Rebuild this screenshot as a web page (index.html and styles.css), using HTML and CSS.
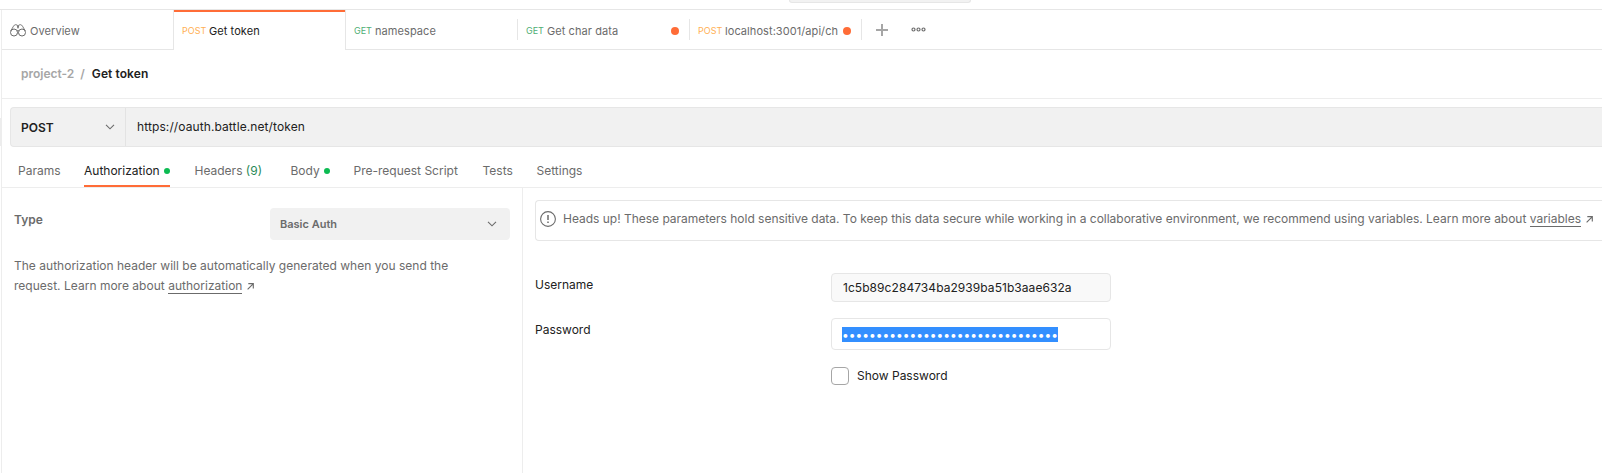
FILE: index.html
```html
<!DOCTYPE html>
<html lang="en">
<head>
<meta charset="utf-8">
<title>Get token</title>
<link rel="stylesheet" href="styles.css">
</head>
<body>
<div class="app">
  <header class="topbar"><div class="search"></div></header>
  <div class="shell">
    <aside class="rail"><div class="rail-item"></div></aside>
    <main class="main">
      <nav class="tabs">
        <div class="tab tab-first">
          <svg class="binoculars" width="16" height="13" viewBox="0 0 16 13" fill="none" stroke="#6b6b6b"><circle cx="4" cy="8.500" r="3.500"/><circle cx="12" cy="8.500" r="3.500"/><path d="M.7 7 3.500 2.200C4.500.3 6.500.3 7.200 1.400h1.600C9.500.3 11.500.3 12.500 2.200L15.300 7M7.200 1.500 8 4.300 8.800 1.500M7.100 6.900Q8 5.900 8.900 6.900M7.500 9h1" stroke-width=".9"/></svg>
          <span class="name">Overview</span>
        </div>
        <div class="tab active"><span class="method post">POST</span><span class="name">Get token</span></div>
        <div class="tab"><span class="method get">GET</span><span class="name">namespace</span></div>
        <div class="tab ruled"><span class="method get">GET</span><span class="name">Get char data</span><i class="unsaved"></i></div>
        <div class="tab ruled"><span class="method post">POST</span><span class="name">localhost:3001/api/ch</span><i class="unsaved"></i></div>
        <div class="tab-actions ruled">
          <svg class="plus" width="12" height="12" viewBox="0 0 12 12" stroke="#a6a6a6" stroke-width="2"><path d="M6 0v12M0 6h12"/></svg>
          <svg class="more" width="15" height="5" viewBox="0 0 15 5" fill="none" stroke="#6b6b6b" stroke-width="1.200"><circle cx="2.500" cy="2.500" r="1.500"/><circle cx="7.500" cy="2.500" r="1.500"/><circle cx="12.500" cy="2.500" r="1.500"/></svg>
        </div>
      </nav>
      <div class="crumbs"><span class="c-project">project-2</span><span class="c-slash">/</span><span class="c-current">Get token</span></div>
      <div class="request">
        <div class="verb"><span class="t-verb">POST</span><svg width="10" height="6" viewBox="0 0 10 6" fill="none" stroke="#6b6b6b" stroke-width="1.100"><path d="m1 .8 4 4 4-4"/></svg></div>
        <div class="url"><span class="t-url">https://oauth.battle.net/token</span></div>
      </div>
      <nav class="sections">
        <span class="section s-params"><span>Params</span></span>
        <span class="section s-auth current"><span>Authorization</span><i class="on"></i></span>
        <span class="section s-headers"><span>Headers <b>(9)</b></span></span>
        <span class="section s-body"><span>Body</span><i class="on"></i></span>
        <span class="section s-pre"><span>Pre-request Script</span></span>
        <span class="section s-tests"><span>Tests</span></span>
        <span class="section s-settings"><span>Settings</span></span>
      </nav>
      <div class="panels">
        <section class="auth-type">
          <div class="type-row">
            <span class="type-label">Type</span>
            <div class="select"><span class="t-basic">Basic Auth</span><svg width="10" height="6" viewBox="0 0 10 6" fill="none" stroke="#6b6b6b" stroke-width="1.100"><path d="m1 .8 4 4 4-4"/></svg></div>
          </div>
          <p class="help"><span class="t-help">The authorization header will be automatically generated when you send the</span><br><span class="t-help">request. Learn more about <a>authorization</a></span><svg class="ext" width="7" height="7" viewBox="0 0 8 8" fill="none" stroke="#6b6b6b" stroke-width="1.300"><path d="M1.500.7h5.700v5.600M7 .9.700 7.300"/></svg></p>
        </section>
        <section class="auth-form">
          <div class="notice">
            <svg width="16" height="16" viewBox="0 0 16 16" fill="none" stroke="#6b6b6b"><circle cx="8" cy="8" r="7.400" stroke-width="1.100"/><path d="M8 4v5M8 10.500v1.500" stroke-width="1.500"/></svg>
            <p><span class="t-notice">Heads up! These parameters hold sensitive data. To keep this data secure while working in a collaborative environment, we recommend using variables. Learn more about <a>variables</a></span><svg class="ext" width="7" height="7" viewBox="0 0 8 8" fill="none" stroke="#6b6b6b" stroke-width="1.300"><path d="M1.500.7h5.700v5.600M7 .9.700 7.300"/></svg></p>
          </div>
          <div class="field user"><label>Username</label><div class="input filled"><span class="t-id">1c5b89c284734ba2939ba51b3aae632a</span></div></div>
          <div class="field pass"><label>Password</label><div class="input secret"><span class="dots">••••••••••••••••••••••••••••••••</span></div></div>
          <div class="show"><i class="checkbox"></i><span>Show Password</span></div>
        </section>
      </div>
    </main>
  </div>
</div>
</body>
</html>
```
FILE: styles.css
```css
* { box-sizing: border-box; }
body { margin: 0; background: #fff; color: #6b6b6b; font: 12px/20px Inter, "Noto Sans", sans-serif; }
span, label { white-space: nowrap; }
svg { display: block; flex: none; }
.app { width: 1602px; height: 473px; overflow: hidden; display: flex; flex-direction: column; }
.topbar { height: 10px; flex: none; border-bottom: 1px solid #e6e6e6; }
.search { width: 182px; height: 3px; margin-left: 789px; background: #f2f2f2; border: 1px solid #e6e6e6; border-top: 0; border-radius: 0 0 4px 4px; }
.shell { flex: 1; display: flex; }
.rail { width: 2px; border-right: 1px solid #ededed; }
.rail-item { margin-top: 108px; height: 28px; background: #ededed; }
.main { width: 1600px; }
.tabs { height: 40px; display: flex; }
.tab { position: relative; width: 172px; flex: none; display: flex; align-items: center; padding: 2px 10px 0 9px; border-bottom: 1px solid #e6e6e6; }
.tab-first { width: 171px; padding-left: 8px; }
.tab.active { width: 173px; padding: 2px 10px 1px 8px; border: solid #e6e6e6; border-width: 0 1px; box-shadow: inset 0 2px #ff6c37; color: #212121; }
.tab.active + .tab { width: 171px; padding-left: 8px; }
.ruled::before { content: ""; position: absolute; left: 0; top: 9px; width: 1px; height: 21px; background: #e6e6e6; }
.binoculars { margin-right: 4px; }
.name { font-size: 11px; letter-spacing: .07px; padding-top: 1px; }
.method { font-size: 9px; flex: none; }
.post { width: 27px; color: #ffb054; }
.get { width: 21px; color: #4fae75; }
.unsaved { width: 8px; height: 8px; flex: none; border-radius: 50%; background: #ff6c37; margin-left: auto; }
.tab-actions { position: relative; flex: 1; display: flex; align-items: center; border-bottom: 1px solid #e6e6e6; padding-left: 15px; }
.plus { margin-right: 23px; }
.crumbs { height: 49px; display: flex; align-items: center; padding-left: 19px; border-bottom: 1px solid #ededed; font-weight: 600; color: #a6a6a6; }
.c-slash { margin: 0 7px 0 6px; }
.c-current { color: #212121; letter-spacing: .08px; }
.request { height: 40px; margin: 8px 0 0 8px; display: flex; border: solid #e6e6e6; border-width: 1px 0 1px 1px; border-radius: 4px 0 0 4px; background: #f1f1f1; color: #212121; }
.verb { width: 115px; display: flex; align-items: center; justify-content: space-between; padding: 0 10px; border-right: 1px solid #e3e3e3; font-weight: 600; }
.t-verb { padding-top: 2px; }
.url { display: flex; align-items: center; padding-left: 11px; letter-spacing: .1px; }
.sections { height: 41px; display: flex; border-bottom: 1px solid #ededed; padding: 7px 0 0 16px; }
.section { display: flex; align-items: center; height: 33px; }
.section b { color: #2b8a57; font-weight: 400; }
.on { width: 6px; height: 6px; border-radius: 50%; background: #0cbb52; margin-left: 4px; }
.current { color: #212121; box-shadow: inset 0 -2px #ff6c37; }
.s-params { width: 66px; }
.s-auth { width: 86px; margin-right: 24.5px; }
.s-headers { width: 96px; }
.s-body { width: 63px; }
.s-pre { width: 129px; }
.s-tests { width: 54px; }
.panels { display: flex; height: 286px; }
.auth-type { width: 521px; flex: none; border-right: 1px solid #ededed; padding: 20px 12px 0; }
.type-row { display: flex; justify-content: space-between; height: 32px; }
.type-label { font-weight: 600; padding-top: 2px; }
.select { width: 240px; display: flex; align-items: center; justify-content: space-between; padding: 0 13px 0 10px; background: #f1f1f1; border-radius: 4px; font-weight: 600; font-size: 11px; }
p { margin: 0; }
.help { margin-top: 16px; }
.t-help { letter-spacing: .015px; }
a { border-bottom: 1px solid #6b6b6b; }
.ext { display: inline-block; margin-left: 5px; }
.auth-form { flex: 1; padding: 12px 0 0 12px; }
.notice { height: 41px; display: flex; border: solid #e6e6e6; border-width: 1px 0 1px 1px; border-radius: 4px 0 0 4px; padding: 8px 0 0 4px; }
.notice svg:first-child { margin: 2px 7px 0 0; }
.notice p { white-space: nowrap; }
.t-notice { letter-spacing: -.015px; }
.field { display: flex; color: #212121; }
.field label { width: 296px; padding-top: 2px; }
.user { margin-top: 32px; }
.pass { margin-top: 16px; }
.input { width: 280px; border: 1px solid #e6e6e6; border-radius: 4px; padding-left: 11px; }
.filled { height: 29px; background: #f9f9f9; line-height: 27px; }
.t-id { letter-spacing: .06px; }
.secret { height: 32px; padding: 8px 0 0 10px; }
.dots { display: block; width: 216px; height: 15px; overflow: hidden; background: #338fff; color: #fff; line-height: 15px; }
.show { margin: 15px 0 0 296px; display: flex; align-items: center; color: #212121; }
.show span { padding-top: 1px; }
.checkbox { width: 18px; height: 18px; border: 1px solid #a6a6a6; border-radius: 4px; margin-right: 8px; }
```
